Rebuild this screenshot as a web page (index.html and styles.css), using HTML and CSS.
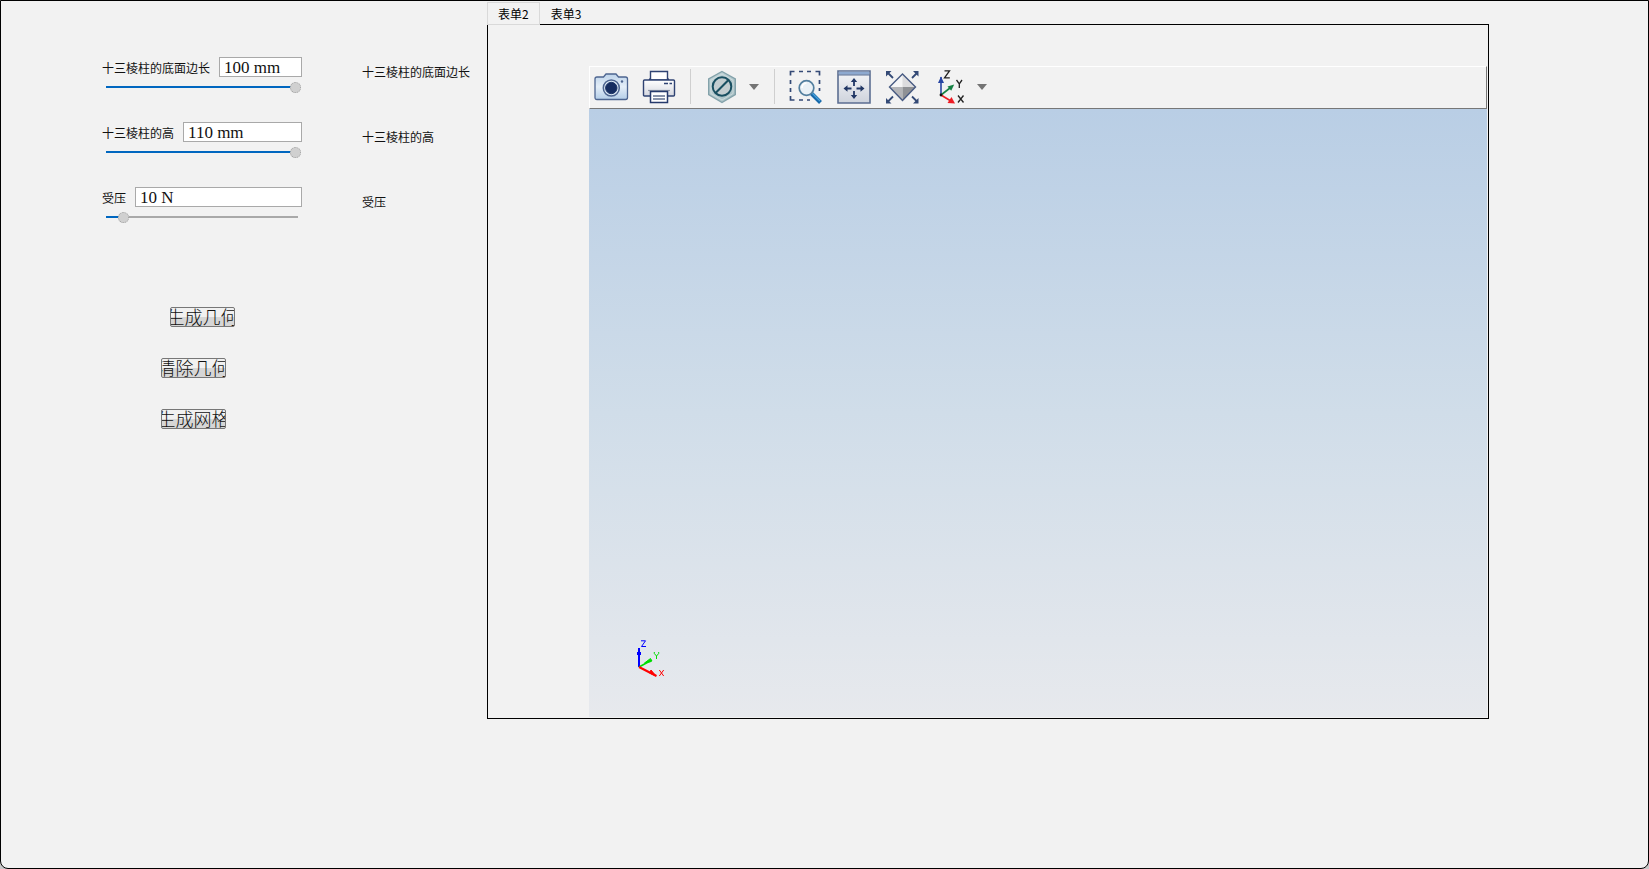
FILE: index.html
```html
<!DOCTYPE html>
<html lang="zh-CN">
<head>
<meta charset="utf-8">
<title>表单</title>
<link rel="stylesheet" href="styles.css">
</head>
<body>
<div class="frame">
<main class="window">
  <form class="sidebar">
    <div class="params">
      <div class="param">
        <div class="field"><label for="edge">十三棱柱的底面边长</label><input class="text-box" id="edge" type="text" value="100 mm"></div>
        <input class="slider" type="range" min="0" max="100" value="100" aria-label="十三棱柱的底面边长" style="--fill:100%">
      </div>
      <div class="caption">十三棱柱的底面边长</div>
      <div class="param">
        <div class="field"><label for="height">十三棱柱的高</label><input class="text-box" id="height" type="text" value="110 mm"></div>
        <input class="slider" type="range" min="0" max="110" value="110" aria-label="十三棱柱的高" style="--fill:100%">
      </div>
      <div class="caption">十三棱柱的高</div>
      <div class="param">
        <div class="field"><label for="force">受压</label><input class="text-box" id="force" type="text" value="10 N"></div>
        <input class="slider" type="range" min="0" max="160" value="10" aria-label="受压" style="--fill:8%">
      </div>
      <div class="caption">受压</div>
    </div>
    <div class="actions">
      <button class="action action-shifted" type="button"><span>生成几何</span></button>
      <button class="action" type="button"><span>清除几何</span></button>
      <button class="action" type="button"><span>生成网格</span></button>
    </div>
  </form>

  <section class="workspace">
    <div class="tabs" role="tablist">
      <button class="tab tab-active" type="button" role="tab" aria-selected="true">表单2</button>
      <button class="tab" type="button" role="tab" aria-selected="false">表单3</button>
    </div>
    <div class="panel" role="tabpanel">
      <div class="toolbar" role="toolbar">
        <button class="tool" type="button" aria-label="截图">
          <svg viewBox="0 0 34 34">
            <defs><linearGradient id="cam" x2="0" y2="1"><stop offset="0" stop-color="#bdd3ea"/><stop offset=".5" stop-color="#e4eef8"/><stop offset="1" stop-color="#b4cee8"/></linearGradient></defs>
            <path d="M1 9q0-2 2-2h6.500l2.500-3h10l2.500 3H31.500q2 0 2 2v18.500q0 2-2 2H3q-2 0-2-2z" fill="url(#cam)" stroke="#4d6590" stroke-width="1.300"/>
            <circle cx="17.300" cy="18" r="8" fill="#dce8f4" stroke="#4d6590" stroke-width="1.500"/>
            <circle cx="17.300" cy="18" r="5.700" fill="#162d60" stroke="#1c3567"/>
            <circle cx="28" cy="11.500" r="1.200" fill="#4d6590"/>
          </svg>
        </button>
        <button class="tool" type="button" aria-label="打印">
          <svg viewBox="0 0 34 34">
            <defs><linearGradient id="prn" x2="0" y2="1"><stop offset="0" stop-color="#fff"/><stop offset="1" stop-color="#d4d7df"/></linearGradient></defs>
            <path d="M6.500 10l2-3h17l2 3z" fill="#1c3060"/>
            <path d="M8.500 1.500h17V10h-17z" fill="#fff" stroke="#2f4373" stroke-width="1.400"/>
            <path d="M2.500 10h29q1 0 1 1v14q0 1-1 1h-29q-1 0-1-1V11q0-1 1-1z" fill="url(#prn)" stroke="#2f4373" stroke-width="1.400"/>
            <path d="M6 20.500h22" stroke="#9198a8" stroke-width="1.200"/>
            <path d="M22 13.500h4m1.500 0H30" stroke="#2f4373" stroke-width="1.400"/>
            <path d="M8.500 21.500h17v11h-17z" fill="#fff" stroke="#263a6c" stroke-width="1.500"/>
            <path d="M11 26h12M11 29h12" stroke="#61708f" stroke-width="1.300"/>
          </svg>
        </button>
        <span class="separator"></span>
        <span class="split">
          <button class="tool" type="button" aria-label="选择">
            <svg viewBox="0 0 34 34">
              <defs><linearGradient id="hex" x2="1" y2="1"><stop offset="0" stop-color="#c5d6da"/><stop offset="1" stop-color="#a1babf"/></linearGradient></defs>
              <path d="M17 1.500l13.300 7.500v15.500L17 32.500 3.700 24.500V9z" fill="url(#hex)" stroke="#83a2aa" stroke-width="1.400"/>
              <path d="M17 4l11 6.300v13.200L17 30 6 23.500V10.300z" fill="none" stroke="#d2dfe1" stroke-width=".8"/>
              <circle cx="17" cy="16.500" r="9.300" fill="#c3cdd0" stroke="#194f61" stroke-width="2"/>
              <path d="M10.800 22.700L23.200 10.300" stroke="#194f61" stroke-width="2"/>
            </svg>
          </button>
          <button class="caret" type="button" aria-label="更多选择"><svg viewBox="0 0 12 8"><path d="M1 1h10L6 7z" fill="#747474"/></svg></button>
        </span>
        <span class="separator"></span>
        <button class="tool" type="button" aria-label="框选缩放">
          <svg viewBox="0 0 34 34">
            <path d="M1.500 5.500v-4h4M10 1.500h4M18 1.500h4M26.500 1.500h4v4M30.500 10v4M1.500 10v4M1.500 18v4M1.500 26v4h4M10 30h4M18 30h3M30.500 18v3" fill="none" stroke="#344a76" stroke-width="1.700"/>
            <path d="M22.500 23.500l9 9" stroke="#1769aa" stroke-width="4"/><path d="M23 23l8 8" stroke="#4aa2db" stroke-width="1.300"/>
            <circle cx="17.500" cy="18" r="7.300" fill="#eaf1f6" stroke="#537f9f" stroke-width="1.700"/>
            <path d="M13 18q0-4.500 4.500-5" fill="none" stroke="#fff" stroke-width="1.500"/>
          </svg>
        </button>
        <button class="tool" type="button" aria-label="缩放到范围">
          <svg viewBox="0 0 34 34">
            <defs><linearGradient id="fit" x2="0" y2="1"><stop offset="0" stop-color="#f4f5f8"/><stop offset="1" stop-color="#ced3dc"/></linearGradient></defs>
            <path d="M1 1h32v32H1z" fill="url(#fit)" stroke="#5c6e91" stroke-width="1.600"/>
            <path d="M1.800 1.800h30.400v3H1.800z" fill="#8da9d0"/><path d="M1 5h32" stroke="#5c6e91"/>
            <path d="M17 11v5M17 21v5M9 18.500h5.500M19.500 18.500H25" stroke="#213765" stroke-width="1.800"/>
            <path d="M13.800 12l3.200-4 3.200 4zM13.800 25l3.200 4 3.200-4zM10.500 15.300v6.400l-4-3.200zM23.500 15.300v6.400l4-3.200z" fill="#213765"/>
          </svg>
        </button>
        <button class="tool" type="button" aria-label="全部显示">
          <svg viewBox="0 0 34 34">
            <path d="M17.500 4L17.500 17 4.500 17z" fill="#f5f5f6"/><path d="M17.500 4l13 13h-13z" fill="#dcdcde"/>
            <path d="M4.500 17h13v13.500z" fill="#b4b5b8"/><path d="M30.500 17h-13v13.500z" fill="#8f9195"/>
            <path d="M17.500 4l13 13-13 13.500L4.500 17z" fill="none" stroke="#475a82" stroke-width="1.400"/>
            <path d="M3 3l5 5M32 3l-5 5M3 31.500l5-5M32 31.500l-5-5" stroke="#344a76" stroke-width="1.800"/>
            <path d="M1 1h5.500L1 6.500zM33.500 1H28l5.500 5.500zM1 33.500V28l5.500 5.500zM33.500 33.500V28L28 33.500z" fill="#344a76"/>
          </svg>
        </button>
        <span class="split">
          <button class="tool" type="button" aria-label="视图方向">
            <svg viewBox="0 0 34 34">
              <path d="M8 25V7" stroke="#2745a3" stroke-width="1.600"/><path d="M5 13l3-6.500 3 6.500z" fill="#2745a3"/>
              <path d="M8 25l9-7" stroke="#158043" stroke-width="1.600"/><path d="M14.500 16.500l6.700-2-3 6.200z" fill="#158043"/>
              <path d="M8 25l9 5.500" stroke="#ed1c24" stroke-width="1.600"/><path d="M18.500 27l3.500 6.500-7.500-.5z" fill="#ed1c24"/>
              <circle cx="8" cy="25" r="1.400" fill="#111"/>
              <path d="M11.500 .8h5l-5 7h5.300M23.500 10l2.800 3.800L29 10M26.300 13.800V18M25 25.500l5.500 7M30.500 25.500l-5.500 7" fill="none" stroke="#222" stroke-width="1.300"/>
            </svg>
          </button>
          <button class="caret" type="button" aria-label="更多视图"><svg viewBox="0 0 12 8"><path d="M1 1h10L6 7z" fill="#747474"/></svg></button>
        </span>
      </div>
      <div class="viewport">
        <svg class="triad" viewBox="0 0 40 44">
          <path d="M9 27V8" stroke="#00f" stroke-width="2"/><path d="M7 12h4v3H7z" fill="#00f"/>
          <path d="M9 27l13-7" stroke="#0d0" stroke-width="1.500"/><path d="M14.500 23l6-4.500.8 3z" fill="#0d0" stroke="#0d0"/>
          <path d="M9 27l17.500 9" stroke="#f00" stroke-width="2"/><path d="M19.500 33l1.500-3 5 6z" fill="#f00" stroke="#f00"/>
          <path d="M11 .8h4.500L11.500 6.500H16" fill="none" stroke="#00f"/>
          <path d="M24.300 12v1.500l2.200 2.500 2.200-2.500V12M26.500 16v3" fill="none" stroke="#0d0"/>
          <path d="M29.300 30l4.400 6M33.700 30l-4.400 6" fill="none" stroke="#f00"/>
        </svg>
      </div>
    </div>
  </section>
</main>
</div>
</body>
</html>
```
FILE: styles.css
```css
* {
  box-sizing: border-box;
}

body {
  margin: 0;
  background: #c8c8c8;
  color: #111;
  font: 12px/20px "Noto Sans CJK SC", sans-serif;
}

.frame {
  overflow: hidden;
}

.window {
  display: flex;
  min-height: 100vh;
  border: 1px solid #000;
  border-radius: 0 0 8px 8px;
  background: #f2f2f2;
}

button,
input {
  margin: 0;
  padding: 0;
  color: inherit;
  font: inherit;
}

/* Parameters */
.sidebar {
  flex: none;
  width: 486px;
  padding: 56px 0 0 101px;
}

.params {
  display: grid;
  grid-template-columns: 200px auto;
  gap: 29px 60px;
}

.param {
  display: flex;
  flex-direction: column;
  gap: 4px;
}

.field {
  display: flex;
  gap: 9px;
  height: 20px;
}

.field label {
  flex: none;
  line-height: 22px;
}

.text-box {
  flex: 1;
  min-width: 0;
  height: 20px;
  padding: 2px 4px 0;
  border: 1px solid #a9a9a9;
  background: #fff;
  font: 17px/16px "Liberation Serif", serif;
}

.caption {
  line-height: 30px;
  white-space: nowrap;
}

.slider {
  appearance: none;
  width: 195px;
  height: 12px;
  margin-left: 4px;
  background: linear-gradient(to right, #0067c0 var(--fill), #a9a9a9 var(--fill)) left center / 192px 2px no-repeat;
}

.slider::-webkit-slider-thumb {
  appearance: none;
  width: 11px;
  height: 11px;
  border: 1px dotted #a0a0a0;
  border-radius: 50%;
  background: #d0d0d0;
}

.actions {
  display: flex;
  flex-direction: column;
  gap: 31px;
  margin: 84px 0 0 59px;
}

.action {
  display: flex;
  align-items: flex-start;
  justify-content: center;
  width: 65px;
  height: 20px;
  overflow: hidden;
  border: 1px solid #777;
  border-radius: 2px;
  background: linear-gradient(#f1f1f1 50%, #d6d6d6 50%);
  font-size: 18px;
  font-weight: 300;
  line-height: 16px;
  white-space: nowrap;
}

.action span {
  flex: none;
}

.action-shifted {
  margin-left: 9px;
}

/* Tabbed workspace */
.workspace {
  display: flex;
  flex: 1;
  flex-direction: column;
  min-width: 0;
  margin: 1px 159px 149px 0;
}

.tabs {
  display: flex;
}

.tab {
  position: relative;
  height: 23px;
  margin-bottom: -1px;
  padding: 0 10px;
  border: 1px solid transparent;
  background: none;
  color: #000;
  line-height: 21px;
}

.tab-active {
  border-color: #d9d9d9;
  background: #f2f2f2;
}

.panel {
  display: flex;
  flex: 1;
  flex-direction: column;
  padding: 41px 1px 1px 101px;
  border: 1px solid #000;
}

.toolbar {
  display: flex;
  align-items: center;
  gap: 14px;
  height: 43px;
  padding: 0 0 2px 4px;
  border: 1px solid;
  border-color: #fff #777 #777 #fff;
}

.tool,
.caret {
  flex: none;
  border: 0;
  background: none;
}

.tool {
  width: 34px;
  height: 34px;
}

.caret {
  width: 12px;
  height: 8px;
}

.tool svg,
.caret svg {
  display: block;
  width: 100%;
  height: 100%;
  overflow: visible;
}

.split {
  display: flex;
  align-items: center;
  gap: 9px;
}

.separator {
  width: 1px;
  height: 35px;
  background: #cfcfcf;
}

.viewport {
  position: relative;
  flex: 1;
  background: linear-gradient(#b9cee5, #d0dde9 50%, #e7e9ed);
}

/* Axis marker floating over the 3D view */
.triad {
  position: absolute;
  bottom: 33px;
  left: 41px;
  width: 40px;
  height: 44px;
}
```
